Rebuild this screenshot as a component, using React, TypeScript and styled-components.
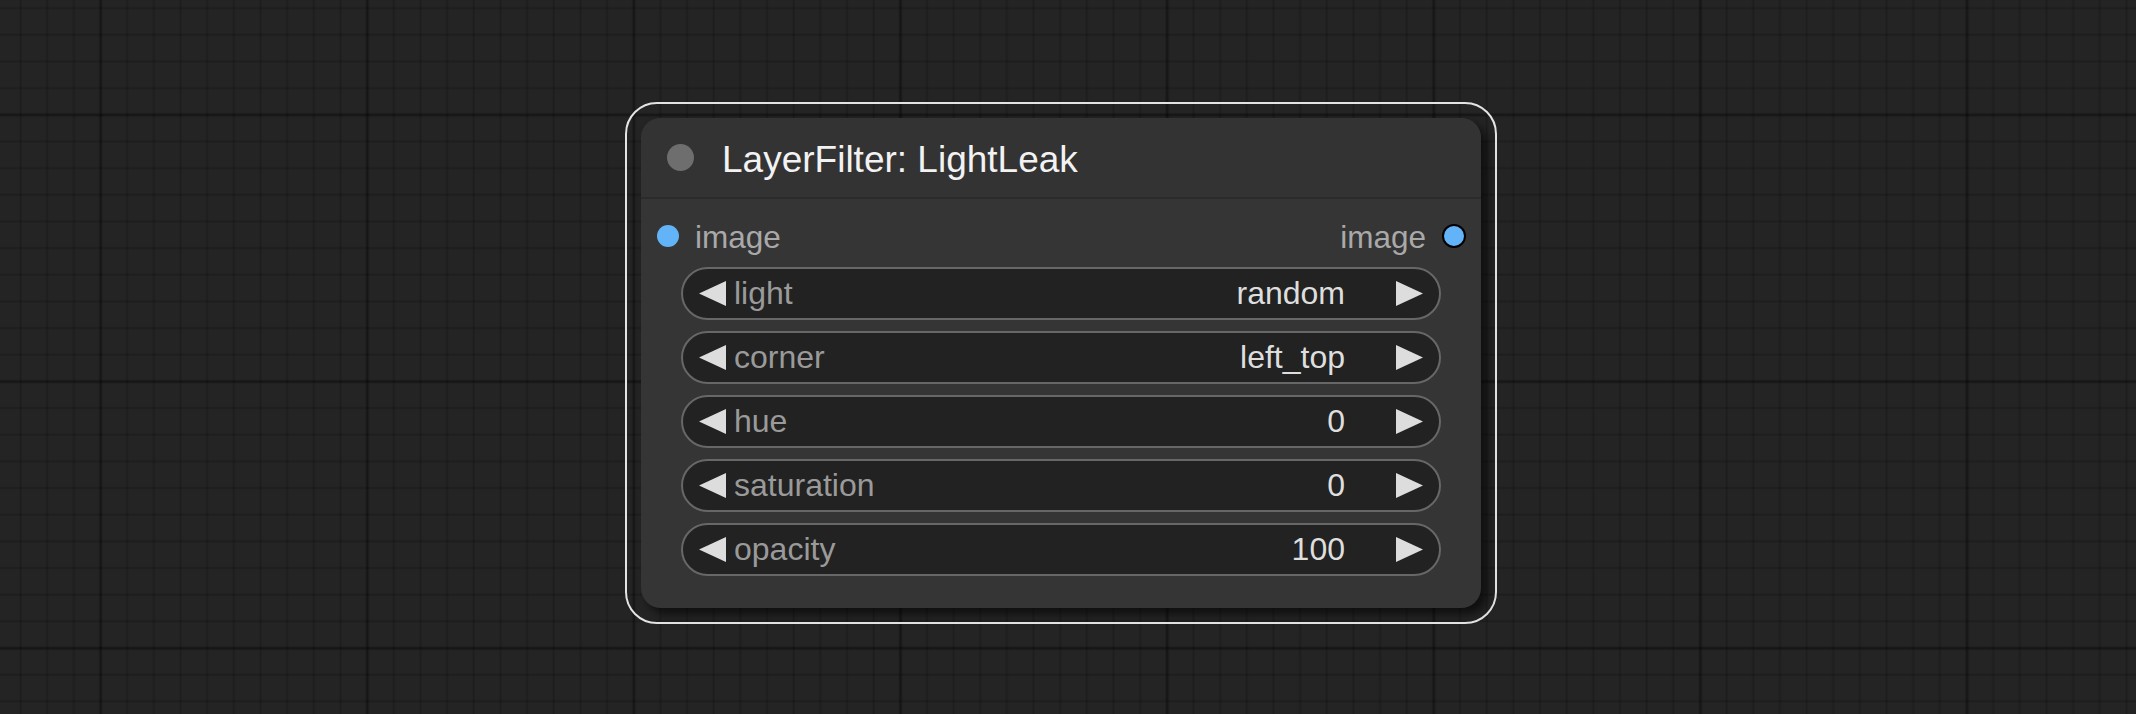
import React from 'react';
import styled, { createGlobalStyle } from 'styled-components';

const GlobalStyle = createGlobalStyle`
  html, body {
    margin: 0;
    padding: 0;
    background: #222;
  }
  * {
    box-sizing: border-box;
  }
`;

// canvas zoom ~2.667, minor grid 10 units, major grid 100 units
const Canvas = styled.div`
  width: 2136px;
  height: 714px;
  overflow: hidden;
  padding: 102px 0 0 625px;
  font-family: "Liberation Sans", Arial, sans-serif;
  background-color: #242424;
  background-image:
    linear-gradient(90deg, transparent 0, rgba(0, 0, 0, 0.3) 2.5px, transparent 5px),
    linear-gradient(180deg, transparent 0, rgba(0, 0, 0, 0.3) 2.5px, transparent 5px),
    linear-gradient(90deg, transparent 0, rgba(0, 0, 0, 0.2) 1.6px, transparent 3.4px),
    linear-gradient(180deg, transparent 0, rgba(0, 0, 0, 0.2) 1.6px, transparent 3.4px);
  background-size:
    266.667px 100%,
    100% 266.667px,
    26.667px 100%,
    100% 26.667px;
  background-position:
    98.2px 0,
    0 112.5px,
    19px 0,
    0 6.6px;
`;

const SelectionOutline = styled.div`
  display: inline-block;
  padding: 14px;
  border: 2px solid #e4e4e4;
  border-radius: 32px;
`;

const Node = styled.div`
  width: 840px;
  height: 490px;
  background: #353535;
  border-radius: 20px;
  box-shadow: 6px 6px 10px rgba(0, 0, 0, 0.6);
  overflow: hidden;
  display: flex;
  flex-direction: column;
`;

const TitleBar = styled.div`
  height: 81px;
  flex: none;
  display: flex;
  align-items: center;
  gap: 28px;
  padding-left: 26px;
  background: #333;
  border-bottom: 2px solid #2b2b2b;
`;

const TitleDot = styled.span`
  width: 27px;
  height: 27px;
  border-radius: 50%;
  background: #6e6e6e;
  flex: none;
`;

const Title = styled.span`
  font-size: 37px;
  color: #f2f2f2;
  white-space: nowrap;
  padding-top: 5px;
`;

const Body = styled.div`
  display: flex;
  flex-direction: column;
  gap: 11px;
  padding: 17px 0 32px;
`;

const SlotRow = styled.div`
  height: 40px;
  display: flex;
  align-items: center;
  justify-content: space-between;
  padding: 0 15px 0 16px;
`;

const Slot = styled.div`
  display: flex;
  align-items: center;
  gap: 16px;
`;

const SlotDot = styled.span<{ $outlined?: boolean }>`
  width: ${(p) => (p.$outlined ? '24px' : '22px')};
  height: ${(p) => (p.$outlined ? '24px' : '22px')};
  border-radius: 50%;
  background: #63b3f8;
  flex: none;
  border: ${(p) => (p.$outlined ? '2.5px solid #000' : 'none')};
`;

const SlotLabel = styled.span`
  font-size: 31.5px;
  color: #a9a9a9;
  padding-top: 2px;
`;

const Widgets = styled.div`
  display: flex;
  flex-direction: column;
  gap: 11px;
  padding: 0 40px;
`;

const Widget = styled.div`
  height: 53px;
  display: flex;
  align-items: center;
  padding: 0 16px;
  background: #222;
  border: 2px solid #676767;
  border-radius: 27px;
`;

const Arrow = styled.svg`
  width: 27px;
  height: 25px;
  flex: none;
  display: block;
`;

const WidgetLabel = styled.span`
  flex: 1;
  margin-left: 8px;
  font-size: 32px;
  color: #9a9a9a;
  white-space: nowrap;
`;

const WidgetValue = styled.span`
  margin-right: 51px;
  font-size: 32px;
  color: #dedede;
  white-space: nowrap;
`;

const LeftArrow = () => (
  <Arrow viewBox="0 0 27 25">
    <polygon points="27,0 27,25 0,12.5" fill="#ddd" />
  </Arrow>
);

const RightArrow = () => (
  <Arrow viewBox="0 0 27 25">
    <polygon points="0,0 0,25 27,12.5" fill="#ddd" />
  </Arrow>
);

const widgets = [
  { label: 'light', value: 'random' },
  { label: 'corner', value: 'left_top' },
  { label: 'hue', value: '0' },
  { label: 'saturation', value: '0' },
  { label: 'opacity', value: '100' },
];

const App: React.FC = () => {
  return (
    <>
      <GlobalStyle />
      <Canvas>
        <SelectionOutline>
          <Node>
            <TitleBar>
              <TitleDot />
              <Title>LayerFilter: LightLeak</Title>
            </TitleBar>
            <Body>
              <SlotRow>
                <Slot>
                  <SlotDot />
                  <SlotLabel>image</SlotLabel>
                </Slot>
                <Slot>
                  <SlotLabel>image</SlotLabel>
                  <SlotDot $outlined />
                </Slot>
              </SlotRow>
              <Widgets>
                {widgets.map((w) => (
                  <Widget key={w.label}>
                    <LeftArrow />
                    <WidgetLabel>{w.label}</WidgetLabel>
                    <WidgetValue>{w.value}</WidgetValue>
                    <RightArrow />
                  </Widget>
                ))}
              </Widgets>
            </Body>
          </Node>
        </SelectionOutline>
      </Canvas>
    </>
  );
};

export default App;
